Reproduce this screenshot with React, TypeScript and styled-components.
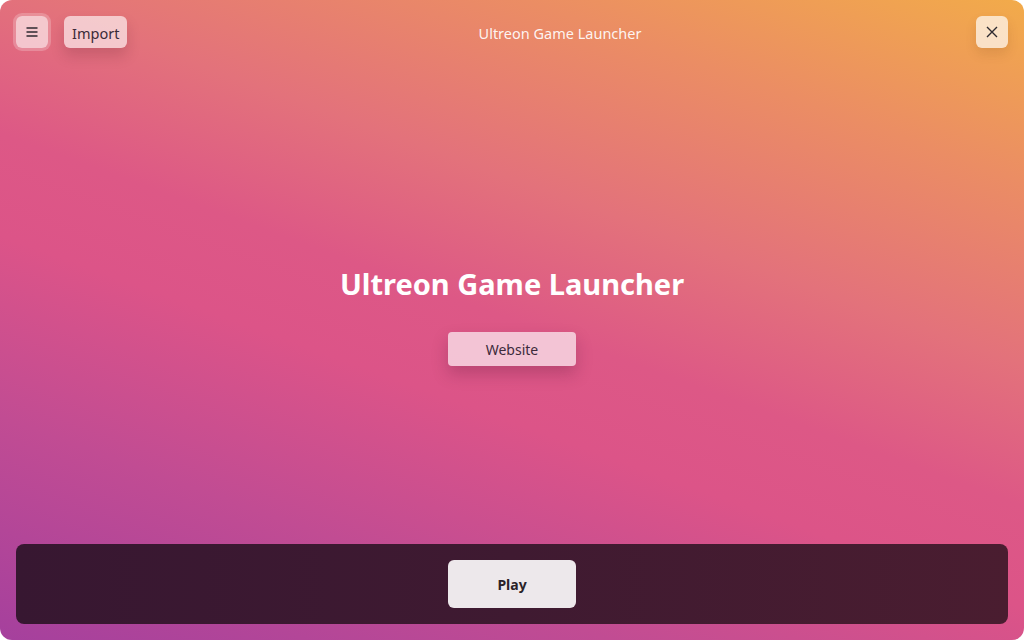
import React from "react";
import styled, { createGlobalStyle } from "styled-components";

const Global = createGlobalStyle`
  html, body { margin: 0; padding: 0; background: #ffffff; }
  body { font-family: "Noto Sans", "Open Sans", sans-serif; }
  * { box-sizing: border-box; }
`;

const Window = styled.div`
  width: 1024px;
  height: 640px;
  border-radius: 12px;
  overflow: hidden;
  background: linear-gradient(
    20deg,
    #a5409d 0%,
    #c14c93 22%,
    #dc5488 40%,
    #dd5886 50%,
    #e3727b 64%,
    #eb8d64 82%,
    #f2ab4a 100%
  );
  display: flex;
  flex-direction: column;
`;

const HeaderBar = styled.header`
  height: 64px;
  padding: 16px 16px 0 16px;
  display: grid;
  grid-template-columns: 1fr auto 1fr;
  align-items: start;
`;

const HeaderStart = styled.div`
  display: flex;
  gap: 16px;
  align-items: center;
`;

const HeaderEnd = styled.div`
  display: flex;
  justify-content: flex-end;
`;

const Title = styled.div`
  height: 34px;
  line-height: 34px;
  margin-left: 96px;
  font-size: 14.5px;
  color: rgba(255, 255, 255, 0.92);
`;

const IconButton = styled.button<{ $focused?: boolean; $tone?: string }>`
  width: 32px;
  height: 32px;
  border: none;
  border-radius: 6px;
  padding: 0;
  display: flex;
  align-items: center;
  justify-content: center;
  background: ${(p) => p.$tone || "rgba(255,255,255,0.62)"};
  color: #2e2a30;
  box-shadow: ${(p) =>
    p.$focused
      ? "0 0 0 3px rgba(255,255,255,0.22)"
      : "0 6px 12px rgba(90,40,20,0.12)"};
`;

const TextButton = styled.button`
  height: 32px;
  padding: 2px 8px 0 8px;
  border: none;
  border-radius: 6px;
  background: rgba(255, 255, 255, 0.62);
  color: #3a2b38;
  font-family: "Noto Sans", sans-serif;
  font-size: 14.5px;
  box-shadow: 0 8px 14px rgba(80, 20, 40, 0.18);
`;

const Content = styled.main`
  flex: 1;
  display: flex;
  flex-direction: column;
  align-items: center;
  justify-content: center;
  padding-top: 22px;
`;

const Heading = styled.h1`
  margin: 0;
  font-size: 29px;
  font-weight: 700;
  color: #ffffff;
  line-height: 40px;
`;

const WebsiteButton = styled.button`
  margin-top: 28px;
  width: 128px;
  height: 34px;
  border: none;
  border-radius: 4px;
  background: rgba(255, 255, 255, 0.65);
  color: #3d2a3b;
  font-family: "Noto Sans", sans-serif;
  font-size: 14px;
  box-shadow: 0 8px 16px rgba(80, 20, 50, 0.25);
`;

const BottomPanel = styled.footer`
  margin: 0 16px 16px 16px;
  height: 80px;
  border-radius: 8px;
  background: linear-gradient(90deg, #371731 0%, #3f1a31 50%, #4a1d30 100%);
  display: flex;
  align-items: center;
  justify-content: center;
`;

const PlayButton = styled.button`
  width: 128px;
  height: 48px;
  border: none;
  border-radius: 6px;
  background: #ede8eb;
  color: #2a2228;
  font-family: "Noto Sans", sans-serif;
  font-size: 14px;
  font-weight: 700;
`;

const MenuIcon = () => (
  <svg width="14" height="14" viewBox="0 0 14 14">
    <path d="M1.5 3h11M1.5 7h11M1.5 11h11" stroke="#2e2a30" strokeWidth="1.6" />
  </svg>
);

const CloseIcon = () => (
  <svg width="14" height="14" viewBox="0 0 14 14">
    <path d="M2 2l10 10M12 2L2 12" stroke="#2e2a30" strokeWidth="1.4" />
  </svg>
);

export default function App() {
  return (
    <>
      <Global />
      <Window>
        <HeaderBar>
          <HeaderStart>
            <IconButton $focused aria-label="Menu">
              <MenuIcon />
            </IconButton>
            <TextButton>Import</TextButton>
          </HeaderStart>
          <Title>Ultreon Game Launcher</Title>
          <HeaderEnd>
            <IconButton $tone="rgba(255,255,255,0.68)" aria-label="Close">
              <CloseIcon />
            </IconButton>
          </HeaderEnd>
        </HeaderBar>
        <Content>
          <Heading>Ultreon Game Launcher</Heading>
          <WebsiteButton>Website</WebsiteButton>
        </Content>
        <BottomPanel>
          <PlayButton>Play</PlayButton>
        </BottomPanel>
      </Window>
    </>
  );
}
